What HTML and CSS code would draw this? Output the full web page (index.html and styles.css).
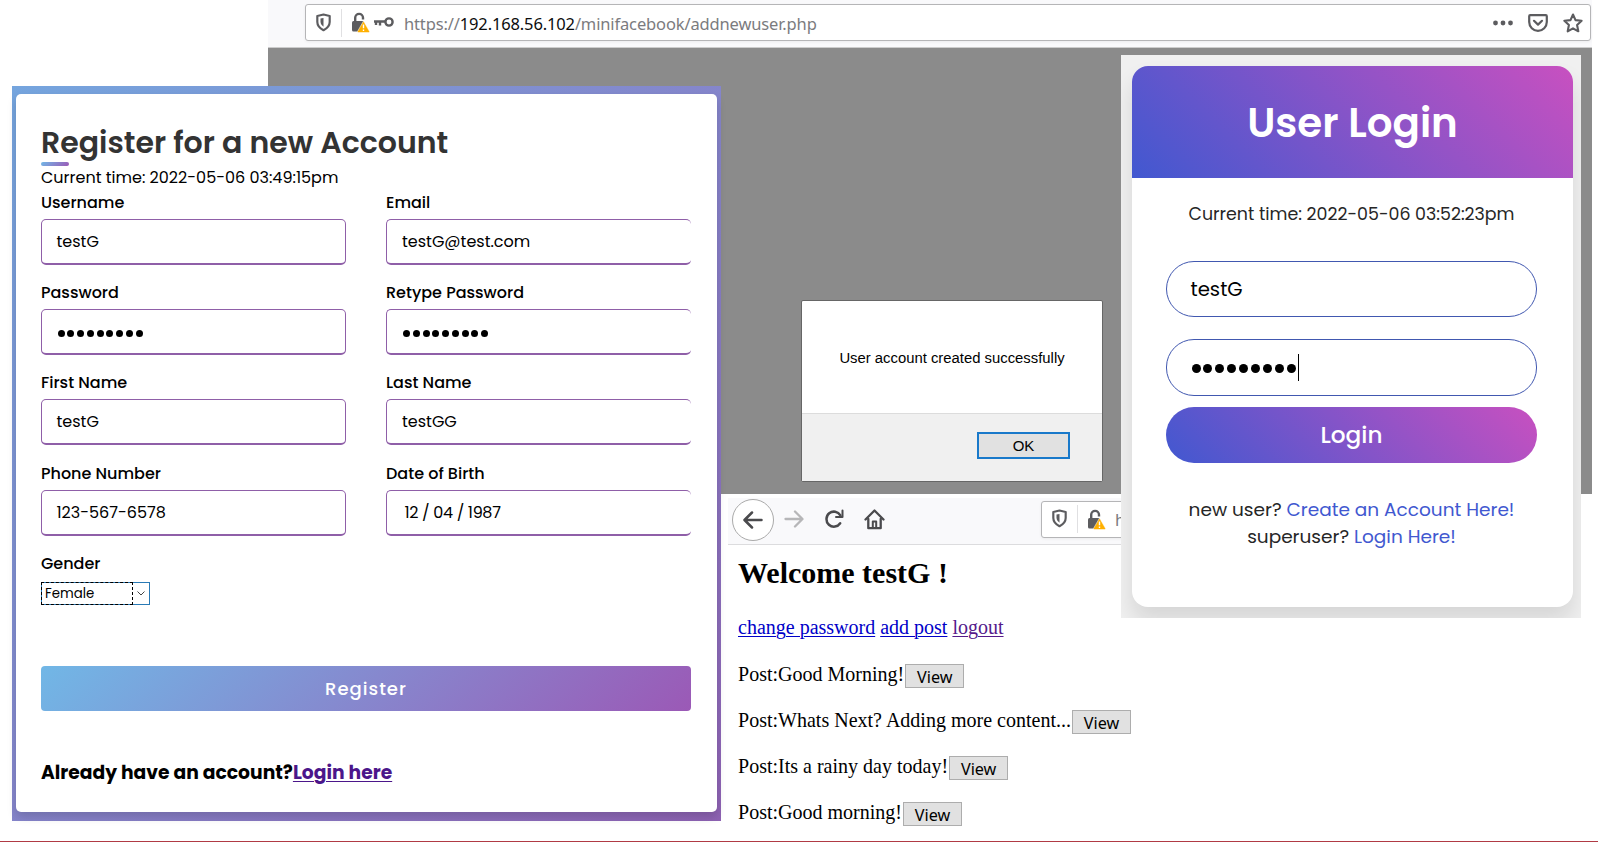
FILE: index.html
```html
<!DOCTYPE html>
<html lang="en">
<head>
<meta charset="utf-8">
<title>MiniFacebook</title>
<link rel="stylesheet" href="styles.css">
</head>
<body>
<svg width="0" height="0" class="defs">
  <symbol id="shield" viewBox="0 0 16 20"><path d="M8 1.500 14.600 3v6.500c0 4-2.800 6.800-6.600 8.800C4.200 16.300 1.400 13.500 1.400 9.500V3z" fill="none" stroke="#5c5c5f" stroke-width="2.300" stroke-linejoin="round"/><path d="M8 5.200v9.300C6 13 4.800 11.500 4.800 9V5.800z" fill="#5c5c5f"/></symbol>
  <symbol id="lock" viewBox="0 0 19 22"><path d="M4.200 11V6.800a3.900 3.900 0 0 1 7.800 0V8.500" fill="none" stroke="#5c5c5f" stroke-width="2.400"/><rect x="1" y="10" width="12" height="10.500" rx="1.500" fill="#5c5c5f"/><path d="M12.500 10 18.400 20.300a.8.8 0 0 1-.7 1.200H7.300a.8.8 0 0 1-.7-1.200z" fill="#ffb000" stroke="#fff" stroke-width=".5"/><path d="M12.500 13.500v3.800M12.500 18.500v1.400" stroke="#fff" stroke-width="1.400"/></symbol>
</svg>

<section class="window alert-window">
  <div class="toolbar">
    <div class="urlbar">
      <svg class="i-shield"><use href="#shield"/></svg>
      <i class="sep"></i>
      <svg class="i-lock"><use href="#lock"/></svg>
      <svg class="i-key" viewBox="0 0 20 12"><circle cx="15" cy="6" r="3.600" fill="none" stroke="#5c5c5f" stroke-width="2.400"/><path d="M0 5.500h12M2 5v4M6 5v4.500" fill="none" stroke="#5c5c5f" stroke-width="2.400"/></svg>
      <span class="url">https://<b>192.168.56.102</b>/minifacebook/addnewuser.php</span>
      <span class="actions">
        <svg width="20" height="6" viewBox="0 0 20 6" fill="#5c5c5f"><circle cx="2.500" cy="3" r="2.400"/><circle cx="10" cy="3" r="2.400"/><circle cx="17.500" cy="3" r="2.400"/></svg>
        <svg width="20" height="18" viewBox="0 0 20 18" fill="none" stroke="#5c5c5f" stroke-width="2.200" stroke-linecap="round" stroke-linejoin="round"><path d="M2.200 1.200h15.600q1 0 1 1V8a8.800 8.800 0 0 1-17.600 0V2.200q0-1 1-1z"/><path d="M6 6.800l4 3.800 4-3.800"/></svg>
        <svg width="20" height="20" viewBox="0 0 20 20" fill="none" stroke="#5c5c5f" stroke-width="2.100" stroke-linejoin="round"><path d="M10 1.500l2.500 5.600 6.100.7-4.500 4.200 1.200 6.300L10 15.300l-5.300 3 1.200-6.300L1.400 7.800l6.100-.7z"/></svg>
      </span>
    </div>
  </div>
</section>

<section class="window dialog">
  <p class="dialog-text">User account created successfully</p>
  <div class="dialog-foot"><button class="ok">OK</button></div>
</section>

<section class="window home">
  <div class="toolbar nav">
    <span class="back"><svg width="20" height="18" viewBox="0 0 20 18" fill="none" stroke="#4a4a4d" stroke-width="2.500" stroke-linecap="round" stroke-linejoin="round"><path d="M18.500 9H2M9 1.500 1.500 9 9 16.500"/></svg></span>
    <svg class="fwd" width="20" height="18" viewBox="0 0 20 18" fill="none" stroke="#b6b6b8" stroke-width="2.300" stroke-linecap="round" stroke-linejoin="round"><path d="M1.500 9H18M11 1.500 18.500 9 11 16.500"/></svg>
    <svg class="reload" width="20" height="20" viewBox="0 0 20 20" fill="none" stroke="#4a4a4d" stroke-width="2.500" stroke-linecap="round"><path d="M16.200 14.300a7.500 7.500 0 1 1 .2-8"/><path d="M18.500 1.500V8H12" stroke-linejoin="round" stroke-width="2"/></svg>
    <svg class="house" width="21" height="21" viewBox="0 0 21 21" fill="none" stroke="#4a4a4d" stroke-width="2.300" stroke-linecap="round" stroke-linejoin="round"><path d="M1.500 10.500 10.500 1.500l9 9"/><path d="M4.300 10v9.200h12.400V10"/><path d="M8.800 18.500v-6h3.400v6" stroke-width="2"/></svg>
    <div class="urlbar">
      <svg class="i-shield"><use href="#shield"/></svg>
      <i class="sep"></i>
      <svg class="i-lock"><use href="#lock"/></svg>
      <span class="url cut">h</span>
    </div>
  </div>
  <div class="page">
    <h2>Welcome testG !</h2>
    <p class="links"><a href="#">change password</a> <a href="#">add post</a> <a href="#" class="visited">logout</a></p>
    <p class="post"><span>Post:Good Morning!</span><button>View</button></p>
    <p class="post"><span>Post:Whats Next? Adding more content...</span><button>View</button></p>
    <p class="post"><span>Post:Its a rainy day today!</span><button>View</button></p>
    <p class="post"><span>Post:Good morning!</span><button>View</button></p>
  </div>
</section>

<section class="window register">
  <div class="reg-card">
    <h1><span>Register for a new Account</span></h1>
    <p class="time">Current time: 2022-05-06 03:49:15pm</p>
    <div class="fields">
      <label>Username<div class="input">testG</div></label>
      <label>Email<div class="input">testG@test.com</div></label>
      <label>Password<div class="input"><span class="dots"><i></i><i></i><i></i><i></i><i></i><i></i><i></i><i></i><i></i></span></div></label>
      <label>Retype Password<div class="input"><span class="dots"><i></i><i></i><i></i><i></i><i></i><i></i><i></i><i></i><i></i></span></div></label>
      <label>First Name<div class="input">testG</div></label>
      <label>Last Name<div class="input">testGG</div></label>
      <label>Phone Number<div class="input">123-567-6578</div></label>
      <label>Date of Birth<div class="input date">12 / 04 / 1987</div></label>
      <label>Gender</label>
    </div>
    <div class="select"><span class="value">Female</span><svg width="8" height="5" viewBox="0 0 8 5"><path d="M.5.5 4 4 7.500.5" fill="none" stroke="#444"/></svg></div>
    <button class="submit">Register</button>
    <p class="already">Already have an account?<a href="#">Login here</a></p>
  </div>
</section>

<section class="window login">
  <div class="login-card">
    <header>User Login</header>
    <div class="login-body">
      <p class="now">Current time: 2022-05-06 03:52:23pm</p>
      <div class="pill">testG</div>
      <div class="pill secret"><span class="dots"><i></i><i></i><i></i><i></i><i></i><i></i><i></i><i></i><i></i></span><i class="caret"></i></div>
      <button class="go">Login</button>
      <p class="more">new user? <a href="#">Create an Account Here!</a></p>
      <p class="more">superuser? <a href="#">Login Here!</a></p>
    </div>
  </div>
</section>
<div class="baseline"></div>
</body>
</html>
```
FILE: styles.css
```css
* { box-sizing: border-box; }
html, body { margin: 0; }
body { position: relative; width: 1598px; height: 842px; overflow: hidden; background: #fff; font-family: Poppins, Inter, "Liberation Sans", sans-serif; color: #000; }
p, h1, h2 { margin: 0; }
button { font: inherit; color: inherit; border: 0; padding: 0; margin: 0; display: block; }
.defs { position: absolute; }
.window { position: absolute; white-space: nowrap; }

/* browser chrome */
.alert-window { left: 268px; top: 0; width: 1324px; height: 494px; background: #8b8b8b; }
.toolbar { height: 48px; background: #f9f9fb; border-bottom: 1px solid #ccc; padding: 4px 1px 0 37px; }
.urlbar { display: flex; align-items: center; height: 37px; background: #fff; border: 1px solid #b5b5b7; border-radius: 3px; padding-left: 10px; box-shadow: 0 1px 3px rgba(0,0,0,.06); }
.i-shield { width: 15px; height: 19px; margin-top: -1px; }
.sep { width: 1px; height: 28px; background: #e0e0e2; margin: 0 9px 0 10px; }
.i-lock { width: 19px; height: 22px; margin-top: -1px; }
.i-key { width: 20px; height: 12px; margin-left: 4px; margin-top: -2px; }
.url { margin-left: 10px; font: 16.500px/34px "Noto Sans", sans-serif; letter-spacing: -.14px; padding-top: 2px; color: #7b7b7e; }
.url b { font-weight: 400; color: #0c0c0d; }
.actions { margin-left: auto; display: flex; align-items: center; gap: 15px; padding-right: 7px; }

/* confirmation dialog */
.dialog { left: 801px; top: 300px; width: 302px; height: 182px; border: 1px solid #666; border-radius: 2px; background: #fff; font-family: "Liberation Sans", Arial, sans-serif; }
.dialog-text { height: 112px; padding-top: 48px; text-align: center; font-size: 14.850px; line-height: 18px; }
.dialog-foot { height: 68px; background: #f0f0f0; border-top: 1px solid #dcdcdc; display: flex; justify-content: flex-end; padding: 18px 32px 0 0; }
.ok { width: 93px; height: 27px; background: #e1e1e1; border: 2px solid #1979ca; font-size: 15px; line-height: 21px; padding-bottom: 1px; }

/* user home page */
.home { left: 721px; top: 494px; width: 877px; height: 347px; background: #fff; padding: 4px 0 0 7px; font-family: "Liberation Serif", "Times New Roman", serif; }
.nav { height: 47px; width: 440px; padding: 0 0 0 4px; display: flex; align-items: center; border-color: #dcdcde; }
.back { width: 42px; height: 42px; flex: none; margin-top: -3px; border: 1px solid #aaa; border-radius: 50%; background: #fff; display: flex; align-items: center; justify-content: center; }
.nav > svg { flex: none; margin-top: -4px; }
.nav .fwd { margin-left: 10px; }
.nav .reload { margin-left: 20px; }
.nav .house { margin-left: 20px; }
.nav .urlbar { flex: none; width: 140px; margin: -4px 0 0 156px; }
.url.cut { margin-left: 9px; }
.page { padding: 0 0 0 10px; }
h2 { font-size: 30px; line-height: 36px; padding-top: 10px; font-weight: 700; }
.links { font-size: 20px; line-height: 24px; margin-top: 24px; }
a { color: #0000c8; text-underline-offset: 2px; text-decoration-thickness: 1px; }
.visited { color: #551a8b; }
.post { display: flex; align-items: center; height: 24px; font-size: 20.020px; line-height: 24px; margin-bottom: 22px; }
.links + .post { margin-top: 25px; }
.post > span { padding-bottom: 4px; }
.post button { width: 59px; height: 24px; margin-left: 1px; background: #e1e1e1; border: 1px solid #adadad; font: 16.200px/22px "Noto Sans", sans-serif; padding-top: 1px; }

/* registration form */
.register { left: 12px; top: 86px; width: 709px; height: 735px; padding: 8px 4px 9px; background: linear-gradient(135deg, #75a5de, #8585cb 50%, #8e62b3); }
.reg-card { height: 718px; background: #fff; border-radius: 5px; padding: 27px 26px 0 25px; box-shadow: 0 5px 10px rgba(0,0,0,.15); }
h1 { font-size: 30px; line-height: 44px; height: 45px; font-weight: 600; color: #333; display: flex; flex-direction: column; }
h1 > span { height: 41px; align-self: flex-start; }
h1::after { content: ""; width: 28px; height: 4px; border-radius: 3px; background: linear-gradient(135deg, #71b7e6, #9b59b6); }
.time { font-size: 16px; line-height: 22px; height: 24px; padding-top: 1px; }
.fields { display: grid; grid-template-columns: 305px 305px; column-gap: 40px; grid-auto-rows: 90.200px; height: 385px; }
.fields label { font-size: 16px; line-height: 24px; font-weight: 500; padding-top: 1px; }
.input { display: flex; align-items: center; height: 46px; margin-top: 4px; padding: 1px 15px 0 14.500px; border: 1px solid #8f5fa8; border-bottom-width: 2px; border-radius: 5px; font-weight: 400; }
.fields label:nth-child(even) .input { border-right: 0; padding-left: 15px; }
.fields label .input.date { padding-left: 17.500px; letter-spacing: -.34px; }
.dots { display: flex; gap: 2.750px; margin-left: 1px; padding-top: 2px; }
.dots i { width: 7px; height: 7px; border-radius: 50%; background: #000; }
.select { margin-top: 7px; width: 109px; height: 23px; display: flex; align-items: center; justify-content: space-between; border: 1px solid #2a7ab5; padding-right: 4px; font-size: 13.330px; }
.value { width: 92px; height: 23px; margin-left: -1px; border: 1px dashed #000; line-height: 22px; padding-left: 3px; }
.submit { margin-top: 61px; width: 100%; height: 45px; border-radius: 4px; background: linear-gradient(135deg, #71b7e6, #9b59b6); color: #fff; font-size: 18px; font-weight: 500; letter-spacing: 1px; }
.already { margin-top: 48px; font-size: 18.720px; line-height: 28px; font-weight: 700; }
.already a { color: #4b168a; }

/* login card */
.login { left: 1121px; top: 55px; width: 460px; height: 563px; padding: 11px 8px 11px 11px; background: #f0f0f0; overflow: hidden; }
.login-card { height: 541px; background: #fff; border-radius: 16px; box-shadow: 0 14px 22px rgba(0,0,0,.11); overflow: hidden; }
.login-card header { height: 112px; text-align: center; color: #fff; font-size: 40.400px; font-weight: 600; line-height: 114px; background: linear-gradient(-135deg, #c850c0, #4158d0); }
.login-body { padding: 24px 36px 0 34px; text-align: center; color: #262626; }
.now { font-size: 17.400px; line-height: 24px; height: 59px; }
.pill { display: flex; align-items: center; height: 56px; margin-bottom: 22px; padding-left: 23.500px; border: 1px solid #4158b0; border-radius: 28px; font-size: 19.700px; color: #000; }
.pill.secret { height: 57px; }
.pill .dots { gap: 2.900px; margin-left: 1px; }
.pill .dots i { width: 9px; height: 9px; }
.caret { width: 1px; height: 27px; background: #000; margin-left: 2px; }
.go { width: 100%; height: 56px; margin-top: -11px; margin-bottom: 33px; padding-bottom: 1px; border-radius: 28px; background: linear-gradient(-135deg, #c850c0, #4158d0); color: #fff; font-size: 23.200px; font-weight: 500; }
.more { font-size: 18.500px; line-height: 27px; }
.more a { color: #4158d0; text-decoration: none; }

.baseline { position: absolute; left: 0; top: 841px; width: 1598px; height: 1px; background: #b03a44; }
```
